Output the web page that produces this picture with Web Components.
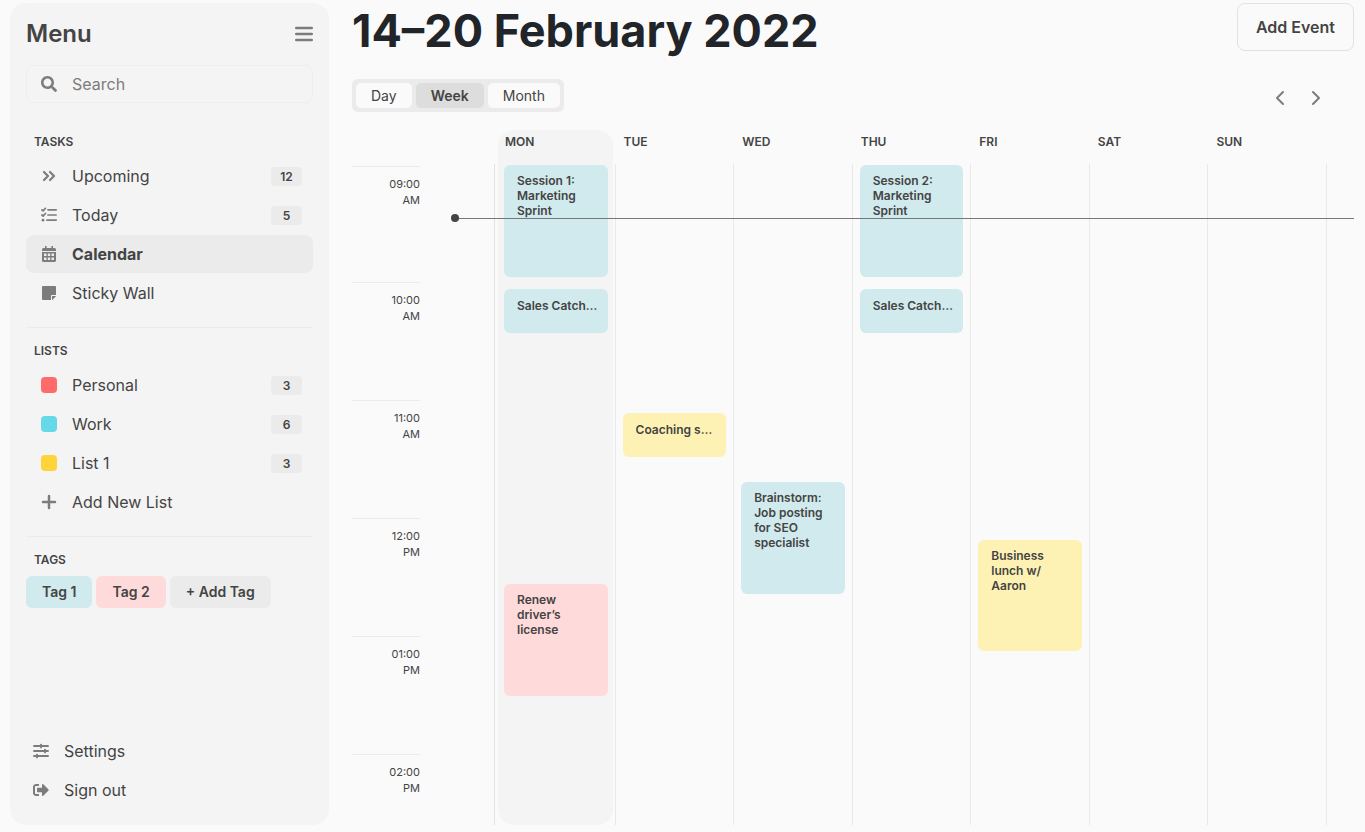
<!DOCTYPE html>
<html lang="en">
<head>
<meta charset="utf-8">
<meta name="viewport" content="width=device-width, initial-scale=1">
<title>Calendar</title>
<style>
  body { margin: 0; background: #fafafa; color: #444; font: 16px/24px Inter, "Noto Sans", sans-serif; }
</style>
</head>
<body>
<planner-app></planner-app>
<script>
const svg = (w, h, vb, body) => `<svg width="${w}" height="${h}" viewBox="0 0 ${vb}" fill="currentColor" aria-hidden="true">${body}</svg>`;
const ICONS = {
  bars: svg(18, 16, '18 16', '<path d="M1.200 2h15.600M1.200 8h15.600M1.200 14h15.600" stroke="currentColor" stroke-width="2.400" stroke-linecap="round"/>'),
  search: svg(16, 16, '512 512', '<path d="M505 442.700L405.300 343c-4.500-4.500-10.600-7-17-7H372c27.600-35.300 44-79.700 44-128C416 93.100 322.900 0 208 0S0 93.100 0 208s93.100 208 208 208c48.300 0 92.700-16.400 128-44v16.300c0 6.400 2.500 12.500 7 17l99.700 99.700c9.400 9.400 24.600 9.400 33.900 0l28.300-28.300c9.400-9.400 9.400-24.600.1-34zM208 336c-70.700 0-128-57.200-128-128 0-70.700 57.200-128 128-128 70.700 0 128 57.200 128 128 0 70.700-57.200 128-128 128z"/>'),
  upcoming: svg(16, 16, '16 16', '<path d="M3 4l4 4-4 4M9 4l4 4-4 4" fill="none" stroke="currentColor" stroke-width="2.200" stroke-linecap="round" stroke-linejoin="round"/>'),
  today: svg(16, 16, '16 16', '<g fill="none" stroke="currentColor" stroke-width="1.700" stroke-linecap="round" stroke-linejoin="round"><path d="M.9 2.800l1.200 1.100 2.300-2.600M.9 8l1.200 1.100 2.300-2.600M7 2.800h8.200M7 8h8.200M6 13.200h9.200"/></g><circle cx="2" cy="13.200" r="1.400"/>'),
  calendar: svg(16, 16, '16 16', '<path fill-rule="evenodd" d="M4 0h1.600v2h4.800V0H12v2h1.500A1.500 1.500 0 0 1 15 3.500V5H1V3.500A1.500 1.500 0 0 1 2.500 2H4zM1 6h14v8.500a1.500 1.500 0 0 1-1.500 1.500h-11A1.500 1.500 0 0 1 1 14.500zm2 1.500V10h2.500V7.500zm3.800 0V10h2.400V7.500zm3.700 0V10H13V7.500zM3 11.500V14h2.500v-2.500zm3.800 0V14h2.400v-2.500zm3.700 0V14H13v-2.500z"/>'),
  sticky: svg(16, 16, '16 16', '<path d="M2 1h12a1 1 0 0 1 1 1v8h-4a1 1 0 0 0-1 1v4H2a1 1 0 0 1-1-1V2a1 1 0 0 1 1-1zM11 11h4v.3L11.300 15H11z"/>'),
  plus: svg(16, 16, '16 16', '<path d="M8 2v12M2 8h12" stroke="currentColor" stroke-width="2.500" stroke-linecap="round"/>'),
  settings: svg(16, 16, '16 16', '<path d="M1 3h14M1 8h14M1 13h14M8 1.600v2.800M12 6.600v2.800M4 11.600v2.800" fill="none" stroke="currentColor" stroke-width="1.900" stroke-linecap="round"/>'),
  signout: svg(16, 16, '512 512', '<path d="M497 273L329 441c-15 15-41 4.500-41-17v-96H152c-13.300 0-24-10.700-24-24v-96c0-13.300 10.700-24 24-24h136V88c0-21.400 25.900-32 41-17l168 168c9.300 9.400 9.300 24.600 0 34zM192 436v-40c0-6.600-5.400-12-12-12H96c-17.700 0-32-14.300-32-32V160c0-17.700 14.300-32 32-32h84c6.600 0 12-5.400 12-12V76c0-6.600-5.400-12-12-12H96c-53 0-96 43-96 96v192c0 53 43 96 96 96h84c6.600 0 12-5.400 12-12z"/>'),
  prev: svg(16, 16, '16 16', '<path d="M11 2L5 8l6 6" fill="none" stroke="currentColor" stroke-width="2" stroke-linecap="round" stroke-linejoin="round"/>'),
  next: svg(16, 16, '16 16', '<path d="M5 2l6 6-6 6" fill="none" stroke="currentColor" stroke-width="2" stroke-linecap="round" stroke-linejoin="round"/>')
};
const RESET = `*{box-sizing:border-box} a{color:inherit;text-decoration:none} button,input{font:inherit;color:inherit;margin:0;border:0;background:none;padding:0} button{cursor:pointer} svg{display:block}`;

const define = (name, render) => customElements.define(name, class extends HTMLElement {
  connectedCallback() {
    if (this.shadowRoot) return;
    this.attachShadow({ mode: 'open' }).innerHTML = render(this);
  }
});

define('app-icon', el => `<style>:host{display:block;flex:none;color:#7c7c7c}svg{display:block}</style>${ICONS[el.getAttribute('name')]}`);

define('nav-item', el => {
  const icon = el.getAttribute('icon'), color = el.getAttribute('color'), count = el.getAttribute('count');
  const inner = `${color ? `<i style="background:${color}"></i>` : `<app-icon name="${icon}"></app-icon>`}<span class="t"><slot></slot></span>${count ? `<span class="n">${count}</span>` : ''}`;
  return `<style>${RESET}
    :host{display:block}
    a,button{display:flex;align-items:center;gap:15px;width:100%;height:38px;padding:0 11px 0 15px;border-radius:8px;text-align:left}
    :host([flush]) a{padding-left:7px}
    :host([active]) a{background:#ebebeb;font-weight:700}
    i{width:16px;height:16px;border-radius:4px;flex:none}
    .t{flex:1}
    .n{width:31px;height:19px;border-radius:4px;background:#ebebeb;text-align:center;font-size:12px;line-height:19px;font-weight:600}
  </style>${el.hasAttribute('action') ? `<button type="button">${inner}</button>` : `<a href="#">${inner}</a>`}`;
});

define('nav-section', el => `<style>
    :host{display:block}
    h2{margin:0 0 7px 8px;font-size:12px;line-height:16px;font-weight:600}
    div{display:flex;flex-direction:column;gap:1px}
  </style><h2>${el.getAttribute('heading')}</h2><div><slot></slot></div>`);

define('tag-chip', el => `<style>${RESET}
    :host{display:block}
    button{height:32px;padding:0 16px;border-radius:6px;background:${el.getAttribute('color')};font-size:14px;line-height:32px;font-weight:600}
  </style><button type="button"><slot></slot></button>`);

define('side-menu', () => `<style>${RESET}
    :host{display:flex;flex-direction:column;padding:16px;border-radius:16px;background:#f4f4f4}
    header{display:flex;align-items:center;justify-content:space-between;height:30px;margin-bottom:16px}
    h1{margin:0;font-size:24px;line-height:30px;font-weight:600}
    label{display:flex;align-items:center;gap:15px;height:38px;padding:0 14px;border:1px solid #eee;border-radius:8px;margin-bottom:31px}
    input{flex:1;min-width:0;outline:0}
    input::placeholder{color:#7c7c7c;opacity:1}
    hr{width:100%;border:0;height:1px;background:#ebebeb;margin:15px 0}
    .tags{display:flex;flex-wrap:wrap;gap:4px}
    h2{margin:0 0 8px 8px;font-size:12px;line-height:16px;font-weight:600}
    footer{margin-top:auto;display:flex;flex-direction:column;gap:1px}
  </style>
  <header><h1>Menu</h1><button type="button" aria-label="Toggle menu"><app-icon name="bars"></app-icon></button></header>
  <label><app-icon name="search"></app-icon><input type="search" placeholder="Search" aria-label="Search"></label>
  <nav-section heading="TASKS">
    <nav-item icon="upcoming" count="12">Upcoming</nav-item>
    <nav-item icon="today" count="5">Today</nav-item>
    <nav-item icon="calendar" active>Calendar</nav-item>
    <nav-item icon="sticky">Sticky Wall</nav-item>
  </nav-section>
  <hr>
  <nav-section heading="LISTS">
    <nav-item color="#ff6b6b" count="3">Personal</nav-item>
    <nav-item color="#66d9e8" count="6">Work</nav-item>
    <nav-item color="#ffd43b" count="3">List 1</nav-item>
    <nav-item icon="plus" action>Add New List</nav-item>
  </nav-section>
  <hr>
  <h2>TAGS</h2>
  <div class="tags"><tag-chip color="#d1eaed">Tag 1</tag-chip><tag-chip color="#ffdada">Tag 2</tag-chip><tag-chip color="#ebebeb">+ Add Tag</tag-chip></div>
  <footer><nav-item icon="settings" flush>Settings</nav-item><nav-item icon="signout" flush>Sign out</nav-item></footer>`);

define('view-switch', () => `<style>${RESET}
    :host{display:flex;gap:4px;padding:4px;border-radius:6px;background:#ebebeb;font-size:14px}
    button{height:25px;padding:0 15px;border-radius:5px;background:#fafafa;line-height:25px}
    button[aria-pressed=true]{background:#ddd;font-weight:600}
  </style><button type="button">Day</button><button type="button" aria-pressed="true">Week</button><button type="button">Month</button>`);

/* start and span are counted in grid rows, 118 to the hour */
define('cal-event', el => `<style>
    :host{display:block;grid-row:${el.getAttribute('start')} / span ${el.getAttribute('span')};min-width:0;padding:8px 10px 8px 13px;border-radius:6px;background:${el.getAttribute('color')};font-size:12px;line-height:15px;font-weight:600;box-sizing:border-box}
    :host([short]){padding-top:9px}
    :host([short]) div{white-space:nowrap;overflow:hidden;text-overflow:ellipsis}
  </style><div><slot></slot></div>`);

define('day-column', el => `<style>
    :host{display:grid;grid-template-rows:34px 1fr;min-width:0}
    .in{grid-area:1/1/3/2;margin:0 3px 0 1px;border-radius:16px}
    :host([today]) .in{background:#f4f4f4}
    h3{grid-area:1/1;margin:0;padding:4px 8px;font-size:12px;line-height:16px;font-weight:600}
    .events{grid-area:2/1;display:grid;grid-auto-rows:1px;align-content:start;padding:0 7px;border-right:1px solid #e9e9e9}
  </style><div class="in"></div><h3>${el.getAttribute('name')}</h3><div class="events"><slot></slot></div>`);

define('hour-axis', () => `<style>
    :host{display:block;padding:36px 75px 0 0}
    time{display:block;box-sizing:border-box;height:118px;border-top:1px solid #ebebeb;padding-top:9px;font-size:11px;line-height:16px;text-align:right}
    time:first-of-type{height:116px}
    time:last-child{height:48px}
  </style>${['09:00 AM', '10:00 AM', '11:00 AM', '12:00 PM', '01:00 PM', '02:00 PM'].map(t => `<time>${t.replace(' ', '<br>')}</time>`).join('')}`);

define('week-grid', () => `<style>
    :host{position:relative;display:grid;grid-template-columns:145px repeat(7,minmax(0,1fr));padding-right:27px}
    .axis{display:grid;grid-template-columns:143px;grid-template-rows:34px 1fr}
    hour-axis{grid-area:1/1/3/2}
    .edge{grid-area:2/1;border-right:1px solid #e4e4e4}
    .now{position:absolute;left:103px;right:0;top:88px;height:1px;background:#777}
    .now::before{content:"";position:absolute;left:-4px;top:-4px;width:8px;height:8px;border-radius:50%;background:#444}
  </style>
  <div class="axis"><hour-axis></hour-axis><div class="edge"></div></div>
  <day-column name="MON" today>
    <cal-event start="2" span="112" color="#d1eaed">Session 1: Marketing Sprint</cal-event>
    <cal-event start="126" span="44" color="#d1eaed" short>Sales Catch-up</cal-event>
    <cal-event start="421" span="112" color="#ffdada">Renew driver’s license</cal-event>
  </day-column>
  <day-column name="TUE"><cal-event start="250" span="44" color="#fdf2b3" short>Coaching session</cal-event></day-column>
  <day-column name="WED"><cal-event start="319" span="112" color="#d1eaed">Brainstorm: Job posting for SEO specialist</cal-event></day-column>
  <day-column name="THU">
    <cal-event start="2" span="112" color="#d1eaed">Session 2: Marketing Sprint</cal-event>
    <cal-event start="126" span="44" color="#d1eaed" short>Sales Catch-up</cal-event>
  </day-column>
  <day-column name="FRI"><cal-event start="377" span="111" color="#fdf2b3">Business lunch w/ Aaron</cal-event></day-column>
  <day-column name="SAT"></day-column>
  <day-column name="SUN"></day-column>
  <div class="now"></div>`);

define('planner-app', () => `<style>${RESET}
    :host{display:grid;grid-template-columns:319px minmax(0,1fr);gap:23px;min-height:100vh;padding:3px 11px 7px 10px;box-sizing:border-box}
    main{display:flex;flex-direction:column}
    header{display:flex;justify-content:space-between;align-items:flex-start;height:56px;margin-bottom:20px}
    h1{margin:0;font-size:45px;line-height:56px;font-weight:700;color:#212529}
    .add{height:48px;padding:0 18px;border:1px solid #e2e2e2;border-radius:8px;font-weight:600}
    .bar{display:flex;justify-content:space-between;align-items:center;height:33px;margin-bottom:18px;padding-right:30px}
    .arrows{display:flex;gap:20px;padding-top:4px}
    week-grid{flex:1}
  </style>
  <side-menu></side-menu>
  <main>
    <header><h1>14–20 February 2022</h1><button class="add" type="button">Add Event</button></header>
    <div class="bar"><view-switch></view-switch><div class="arrows"><button type="button" aria-label="Previous week"><app-icon name="prev"></app-icon></button><button type="button" aria-label="Next week"><app-icon name="next"></app-icon></button></div></div>
    <week-grid></week-grid>
  </main>`);
</script>
</body>
</html>
